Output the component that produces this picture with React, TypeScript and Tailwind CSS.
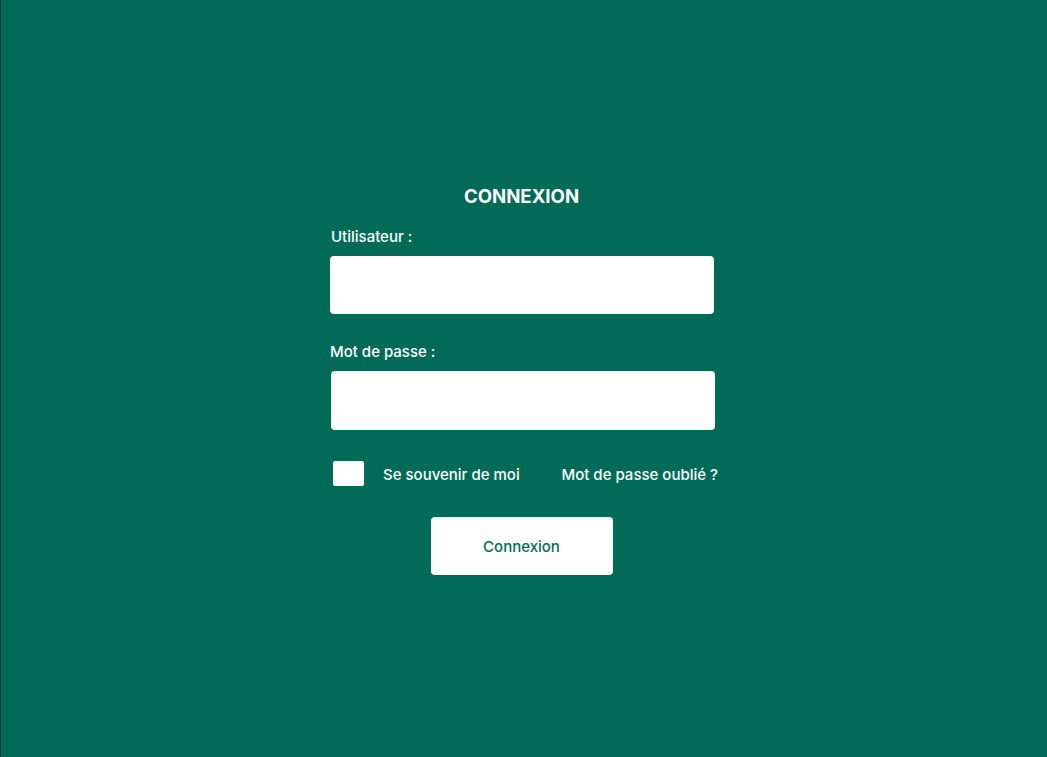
export default function App() {
  return (
    <div className="min-h-[757px] w-full bg-[#016b57] border-l border-[#0d3b33] flex justify-center font-['Inter','Noto_Sans',sans-serif] text-white">
      <div className="w-[385px] pt-[184px] flex flex-col ml-[-3px]">
        <h1 className="text-center text-[18.6px] leading-[24px] font-bold pr-[2px]">CONNEXION</h1>
        <label className="mt-[17px] ml-[1px] text-[15px] leading-[24px] font-medium">Utilisateur :</label>
        <input className="mt-[7px] h-[58px] w-[384px] rounded-[4px] bg-white outline-none px-3 text-black" />
        <label className="mt-[26px] text-[15px] leading-[24px] font-medium">Mot de passe :</label>
        <input type="password" className="mt-[7px] ml-[1px] h-[59px] w-[384px] rounded-[4px] bg-white outline-none px-3 text-black" />
        <div className="mt-[31px] flex items-center">
          <div className="ml-[3px] w-[31px] h-[25px] rounded-[2px] bg-white" />
          <span className="ml-[19px] pt-[3px] text-[15px] font-medium">Se souvenir de moi</span>
          <span className="ml-auto mr-[-3px] pt-[3px] text-[15px] font-medium">Mot de passe oublié ?</span>
        </div>
        <button className="mt-[30px] self-center ml-[-2px] w-[182px] h-[58px] pt-[3px] rounded-[4px] bg-white text-[#016b57] text-[15px] font-medium">
          Connexion
        </button>
      </div>
    </div>
  );
}
